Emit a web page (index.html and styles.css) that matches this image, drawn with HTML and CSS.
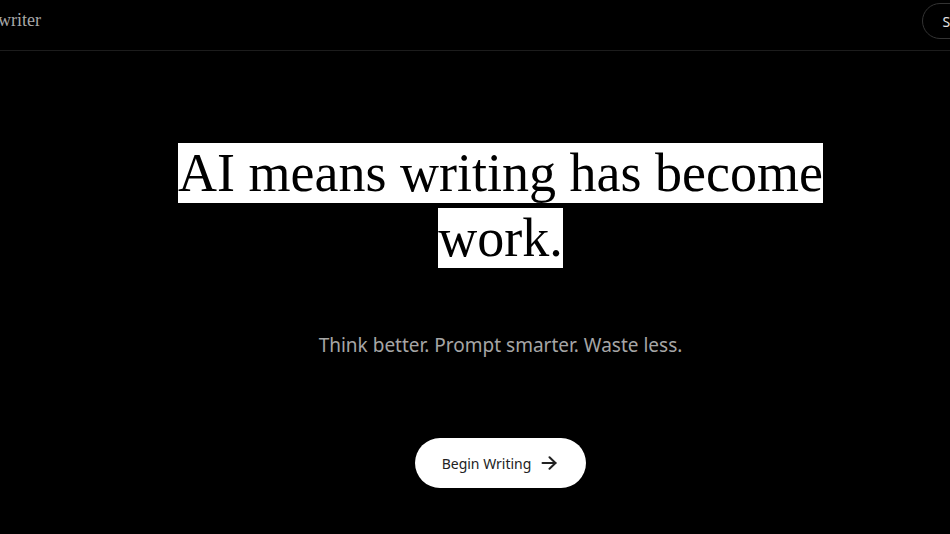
FILE: index.html
```html
<!DOCTYPE html>
<html>
<head>
    <link rel="stylesheet" href="styles.css">
</head>
<body>
    <header class="top-bar">
        <div class="logo">writer</div>
        <button class="sign-btn">Sign in</button>
    </header>
    <main class="hero">
        <h1 class="headline"><span class="mark">AI means writing has become work.</span></h1>
        <p class="tagline">Think better. Prompt smarter. Waste less.</p>
        <button class="begin-btn">
            Begin Writing
            <svg width="16" height="14" viewBox="0 0 16 14" fill="none" stroke="currentColor" stroke-width="2" stroke-linecap="round" stroke-linejoin="round">
                <path d="M1.5 7h13"></path>
                <path d="M8.5 1.2l6 5.8-6 5.8"></path>
            </svg>
        </button>
    </main>
</body>
</html>
```

FILE: styles.css
```css
* {
    box-sizing: border-box;
    margin: 0;
    padding: 0;
}

body {
    background: #000;
    color: #fff;
    font-family: "Noto Sans", sans-serif;
    height: 100vh;
    overflow: hidden;
}

.top-bar {
    display: flex;
    align-items: flex-start;
    justify-content: space-between;
    height: 51px;
    border-bottom: 1px solid #1c1c1c;
    overflow: hidden;
}

.logo {
    font-family: "Liberation Serif", serif;
    font-size: 18px;
    line-height: 22px;
    color: #a8a8a8;
    margin-left: -2px;
    margin-top: 9px;
}

.sign-btn {
    flex: none;
    height: 36px;
    padding: 0 16px 0 20px;
    margin-right: -54px;
    margin-top: 3px;
    border: 1px solid #333;
    border-radius: 18px;
    background: #000;
    color: #e6e6e6;
    font-family: "Noto Sans", sans-serif;
    font-size: 14px;
}

.hero {
    display: flex;
    flex-direction: column;
    align-items: center;
    padding-top: 90px;
    padding-left: 51px;
    text-align: center;
}

.headline {
    width: 680px;
    font-family: "Liberation Serif", serif;
    font-weight: normal;
    font-size: 54px;
    line-height: 65px;
}

.mark {
    background: #fff;
    color: #000;
}

.tagline {
    margin-top: 60px;
    font-size: 19px;
    line-height: 28px;
    color: #a6a6a6;
}

.begin-btn {
    display: flex;
    align-items: center;
    gap: 10px;
    margin-top: 79px;
    height: 50px;
    padding: 0 29px 0 27px;
    border: none;
    border-radius: 25px;
    background: #fff;
    color: #222;
    font-family: "Noto Sans", sans-serif;
    font-size: 14px;
    cursor: pointer;
}
```
